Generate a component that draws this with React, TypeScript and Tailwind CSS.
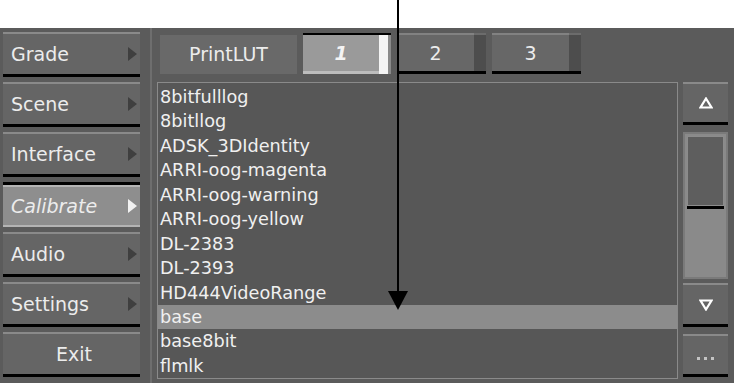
const menu = ['Grade', 'Scene', 'Interface', 'Calibrate', 'Audio', 'Settings'];

const luts = [
  '8bitfulllog',
  '8bitllog',
  'ADSK_3DIdentity',
  'ARRI-oog-magenta',
  'ARRI-oog-warning',
  'ARRI-oog-yellow',
  'DL-2383',
  'DL-2393',
  'HD444VideoRange',
  'base',
  'base8bit',
  'flmlk',
];

function SideButton({ label, active, arrow = true }: { label: string; active?: boolean; arrow?: boolean }) {
  return (
    <div className={`flex h-[45px] flex-col ${active ? 'border-t-[3px] border-black' : ''}`}>
      <div
        className={`flex flex-1 items-center border-t-2 pl-2 pr-[3px] ${
          active ? 'border-[#b4b4b4] bg-[#8e8e8e]' : 'border-[#8a8a8a] bg-[#656565]'
        } ${arrow ? 'justify-between' : 'justify-center'}`}
      >
        <span className={`text-[19px] text-[#ececec] ${active ? 'italic' : ''}`}>{label}</span>
        {arrow && (
          <span
            className={`h-0 w-0 border-y-[7px] border-l-[9px] border-y-transparent ${
              active ? 'border-l-[#f2f2f2]' : 'border-l-[#3f3f3f]'
            }`}
          />
        )}
      </div>
      {!active && <div className="h-[3px] bg-black" />}
      {active && <div className="h-[2px] bg-[#b4b4b4]" />}
    </div>
  );
}

function Tab({ label }: { label: string }) {
  return (
    <div className="flex h-[41px] w-[89px] flex-col">
      <div className="flex flex-1">
        <div className="flex flex-1 items-center justify-center border-t-2 border-[#828282] bg-[#676767] text-[19px] text-[#ececec]">
          {label}
        </div>
        <div className="w-[12px] border-t-2 border-[#6c6c6c] bg-[#4d4d4d]" />
      </div>
      <div className="h-[3px] bg-black" />
    </div>
  );
}

function ScrollButton({ children, h }: { children: React.ReactNode; h: string }) {
  return (
    <div className={`flex ${h} flex-col`}>
      <div className="flex flex-1 items-center justify-center border-t-2 border-[#8a8a8a] bg-[#656565] text-white">
        {children}
      </div>
      <div className="h-[3px] bg-black" />
    </div>
  );
}

export default function App() {
  return (
    <div
      className="relative h-[383px] w-[734px] overflow-hidden bg-white"
      style={{ fontFamily: '"DejaVu Sans", "Liberation Sans", sans-serif' }}
    >
      <div className="mt-[28px] flex h-[355px] bg-[#5b5b5b]">
        {/* side menu */}
        <div className="flex w-[152px] border-r-2 border-[#6e6e6e]">
          <div className="ml-[3px] mt-[4px] flex w-[137px] flex-col gap-[5px]">
            {menu.map((m) => (
              <SideButton key={m} label={m} active={m === 'Calibrate'} />
            ))}
            <SideButton label="Exit" arrow={false} />
          </div>
        </div>

        <div className="ml-[5px] flex flex-1 flex-col">
          {/* tabs */}
          <div className="mt-[5px] flex h-[44px] items-start gap-[6px] pl-[3px]">
            <div className="mt-[2px] flex h-[39px] w-[137px] items-center justify-center bg-[#696969] text-[19px] text-[#ececec]">
              PrintLUT
            </div>
            <div className="flex h-[41px] w-[88px] border-t-2 border-black">
              <div className="flex flex-1 items-center justify-center border-b-[3px] border-[#bdbdbd] bg-[#9a9a9a] text-[19px] font-bold italic text-[#f4f4f4]">
                1
              </div>
              <div className="w-[9px] bg-[#f4f4f4]" />
              <div className="w-[3px] bg-[#8a8a8a]" />
            </div>
            <Tab label="2" />
            <Tab label="3" />
          </div>

          <div className="mt-[5px] flex gap-[5px]">
            {/* list */}
            <div className="h-[297px] w-[521px] overflow-hidden border border-[#8a8a8a] bg-[#575757] pt-[2px]">
              {luts.map((l) => (
                <div
                  key={l}
                  className={`h-[24.45px] pl-[2px] text-[17.7px] leading-[24px] text-[#f0f0f0] ${
                    l === 'base' ? 'bg-[#8c8c8c]' : ''
                  }`}
                >
                  {l}
                </div>
              ))}
            </div>

            {/* scrollbar */}
            <div className="flex w-[45px] flex-col">
              <ScrollButton h="h-[43px]">
                <svg width="14" height="12" viewBox="0 0 14 12">
                  <path d="M7 1.5 L12.5 10.5 L1.5 10.5 Z" fill="none" stroke="#fff" strokeWidth="2.2" strokeLinejoin="miter" />
                </svg>
              </ScrollButton>
              <div className="mt-[7px] flex h-[147px] flex-col border-2 border-[#7a7a7a] bg-[#8a8a8a] p-[2px]">
                <div className="h-[73px] border-b-[3px] border-black bg-[#5e5e5e] shadow-[inset_0_0_0_1px_#8c8c8c]" />
              </div>
              <div className="mt-[4px]">
                <ScrollButton h="h-[44px]">
                  <svg width="14" height="12" viewBox="0 0 14 12">
                    <path d="M7 10.5 L12.5 1.5 L1.5 1.5 Z" fill="none" stroke="#fff" strokeWidth="2.2" strokeLinejoin="miter" />
                  </svg>
                </ScrollButton>
              </div>
              <div className="mt-[7px]">
                <ScrollButton h="h-[43px]">
                  <div className="mt-[6px] flex gap-[4px]">
                    <span className="h-[3px] w-[3px] bg-[#c4c4c4]" />
                    <span className="h-[3px] w-[3px] bg-[#c4c4c4]" />
                    <span className="h-[3px] w-[3px] bg-[#c4c4c4]" />
                  </div>
                </ScrollButton>
              </div>
            </div>
          </div>
        </div>
      </div>

      {/* callout arrow */}
      <div className="absolute left-[397px] top-0 h-[293px] w-[2px] bg-black" />
      <div className="absolute left-[388px] top-[291px] h-0 w-0 border-x-[10px] border-t-[19px] border-x-transparent border-t-black" />
    </div>
  );
}
